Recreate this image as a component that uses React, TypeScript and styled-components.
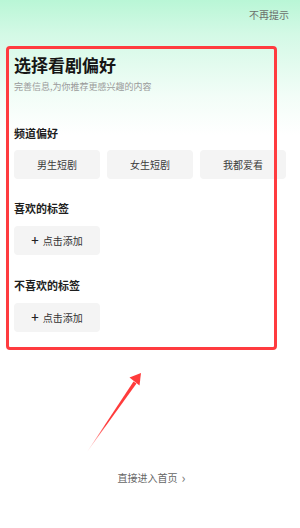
import React from 'react';
import styled, {createGlobalStyle} from 'styled-components';

const GlobalStyle = createGlobalStyle`
  html, body {
    margin: 0;
    padding: 0;
    background: #ffffff;
  }
  * {
    box-sizing: border-box;
  }
`

const channels = ['男生短剧', '女生短剧', '我都爱看']

function App() {
    return (
        <Page>
            <GlobalStyle/>
            <TopBar>
                <SkipHint>不再提示</SkipHint>
            </TopBar>
            <Content>
                <Title>选择看剧偏好</Title>
                <Subtitle>完善信息,为你推荐更感兴趣的内容</Subtitle>

                <Section $top={33}>
                    <SectionLabel>频道偏好</SectionLabel>
                    <OptionRow>
                        {channels.map(c => <OptionChip key={c}>{c}</OptionChip>)}
                    </OptionRow>
                </Section>

                <Section $top={22}>
                    <SectionLabel>喜欢的标签</SectionLabel>
                    <AddChip><Plus>+</Plus>点击添加</AddChip>
                </Section>

                <Section $top={23}>
                    <SectionLabel>不喜欢的标签</SectionLabel>
                    <AddChip><Plus>+</Plus>点击添加</AddChip>
                </Section>
            </Content>

            <Footer>
                <HomeLink>直接进入首页<Chevron>›</Chevron></HomeLink>
            </Footer>

            {/* annotation overlays */}
            <HighlightBox/>
            <Arrow width="300" height="528" viewBox="0 0 300 528">
                <defs>
                    <linearGradient id="arrowFade" x1="87" y1="452" x2="141" y2="373" gradientUnits="userSpaceOnUse">
                        <stop offset="0" stopColor="#ff3b3b" stopOpacity="0.2"/>
                        <stop offset="0.35" stopColor="#ff3b3b" stopOpacity="1"/>
                        <stop offset="1" stopColor="#ff3b3b"/>
                    </linearGradient>
                </defs>
                <path d="M87 452 L133.5 381.5 L136.5 383.5 Z" fill="url(#arrowFade)"/>
                <path d="M141 373 L129.5 377.5 L139.5 385.5 Z" fill="#ff3b3b"/>
            </Arrow>
        </Page>
    );
}

export default App;


const Page = styled.div`
  position: relative;
  width: 300px;
  height: 528px;
  overflow: hidden;
  font-family: "Noto Sans CJK SC", "Noto Sans", sans-serif;
  background: linear-gradient(180deg, #b9f6d6 0%, #d4f9e6 35px, #f2fdf7 95px, #ffffff 135px);
  display: flex;
  flex-direction: column;
`

const TopBar = styled.div`
  display: flex;
  justify-content: flex-end;
  padding: 8px 11px 0 0;
`

const SkipHint = styled.span`
  font-size: 10px;
  line-height: 14px;
  color: #6b6f6c;
`

const Content = styled.div`
  display: flex;
  flex-direction: column;
  padding-left: 14px;
`

const Title = styled.h1`
  margin: 33px 0 0;
  font-size: 17px;
  line-height: 20px;
  font-weight: 700;
  color: #161616;
`

const Subtitle = styled.p`
  margin: 6px 0 0;
  font-size: 9px;
  line-height: 12px;
  color: #9a9a9a;
`

const Section = styled.section<{ $top: number }>`
  display: flex;
  flex-direction: column;
  align-items: flex-start;
  gap: 10px;
  margin-top: ${p => p.$top}px;
`

const SectionLabel = styled.h2`
  margin: 0;
  font-size: 11px;
  line-height: 14px;
  font-weight: 700;
  color: #1e1e1e;
`

const OptionRow = styled.div`
  display: flex;
  gap: 7px;
`

const OptionChip = styled.div`
  width: 86px;
  height: 29px;
  border-radius: 4px;
  background: #f4f4f4;
  display: flex;
  align-items: center;
  justify-content: center;
  font-size: 10px;
  color: #3a3a3a;
  flex-shrink: 0;
`

const AddChip = styled(OptionChip)`
  margin-top: 1px;
  gap: 4px;
  color: #333333;
`

const Plus = styled.span`
  font-size: 13px;
  line-height: 14px;
  font-weight: 500;
  color: #222222;
  margin-top: -1px;
`

const Footer = styled.div`
  display: flex;
  justify-content: center;
  margin-top: 139px;
  padding-left: 3px;
`

const HomeLink = styled.span`
  font-size: 10px;
  line-height: 14px;
  color: #666666;
  display: flex;
  align-items: center;
  gap: 4px;
`

const Chevron = styled.span`
  font-size: 13px;
  line-height: 14px;
  color: #777777;
`

const HighlightBox = styled.div`
  position: absolute;
  left: 6px;
  top: 46px;
  width: 271px;
  height: 304px;
  border: 3px solid #ff3b3f;
  border-radius: 4px;
  pointer-events: none;
`

const Arrow = styled.svg`
  position: absolute;
  left: 0;
  top: 0;
  pointer-events: none;
`
